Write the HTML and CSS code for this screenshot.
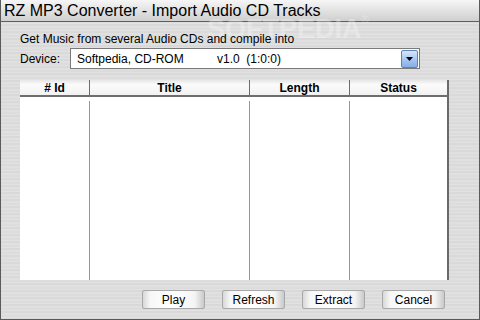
FILE: index.html
```html
<!DOCTYPE html>
<html>
<head>
  <title>RZ MP3 Converter - Import Audio CD Tracks</title>
  <link rel="stylesheet" href="styles.css">
</head>
<body>
  <div class="window">
    <div class="titlebar">RZ MP3 Converter - Import Audio CD Tracks</div>
    <div class="watermark">SOFTPEDIA<span class="reg">&reg;</span></div>
    <div class="content">
      <p class="intro">Get Music from several Audio CDs and compile into</p>
      <div class="device-row">
        <label>Device:</label>
        <div class="select">
          <span class="drive">Softpedia, CD-ROM</span>
          <span class="version">v1.0&nbsp;&nbsp;(1:0:0)</span>
          <span class="arrow"><svg width="7" height="4" viewBox="0 0 7 4"><path d="M0 0h7L3.5 4z" fill="#000"/></svg></span>
        </div>
      </div>
      <div class="tracks">
        <div class="col col-id"><div class="head"># Id</div><div class="cells"></div></div>
        <div class="col col-title"><div class="head">Title</div><div class="cells"></div></div>
        <div class="col col-length"><div class="head">Length</div><div class="cells"></div></div>
        <div class="col col-status"><div class="head">Status</div><div class="cells"></div></div>
      </div>
      <div class="buttons">
        <button>Play</button>
        <button>Refresh</button>
        <button>Extract</button>
        <button>Cancel</button>
      </div>
    </div>
  </div>
</body>
</html>
```

FILE: styles.css
```css
html, body {
  margin: 0;
  padding: 0;
}

body {
  font-family: "Liberation Sans", Arial, sans-serif;
  font-size: 12px;
  color: #000;
}

.window {
  position: relative;
  width: 480px;
  height: 320px;
  box-sizing: border-box;
  border: 1px solid #5a5a5a;
  border-top: none;
  background: repeating-linear-gradient(180deg, #dcdcdc 0, #dcdcdc 2px, #e2e2e2 2px, #e2e2e2 3px, #d9d9d9 3px, #d9d9d9 5px, #e0e0e0 5px, #e0e0e0 7px);
  overflow: hidden;
}

.titlebar {
  height: 21px;
  padding-left: 3px;
  line-height: 22px;
  font-size: 16px;
  border-bottom: 1px solid #5f5f5f;
  background: linear-gradient(180deg, #f6f6f6 0%, #e4e4e4 45%, #cfcfcf 100%);
}

.watermark {
  position: absolute;
  left: 206px;
  top: 14px;
  font-size: 27px;
  font-weight: bold;
  color: rgba(255, 255, 255, 0.3);
}

.watermark .reg {
  font-size: 10px;
  vertical-align: top;
  font-weight: normal;
}

.content {
  position: relative;
  padding: 9px 0 0 19px;
}

.intro {
  margin: 0;
  height: 17px;
  line-height: 16px;
}

.device-row {
  display: flex;
  align-items: center;
  height: 21px;
}

.device-row label {
  width: 50px;
}

.select {
  display: flex;
  align-items: center;
  width: 348px;
  height: 19px;
  border: 1px solid #7a7a7a;
  background: #fff;
}

.select .drive {
  width: 140px;
  padding-left: 6px;
}

.select .version {
  flex: 1;
}

.select .arrow {
  display: flex;
  align-items: center;
  justify-content: center;
  width: 15px;
  height: 16px;
  margin-right: 1px;
  border: 1px solid #5d82b8;
  border-radius: 2px;
  background: linear-gradient(180deg, #d6e6fb 0%, #a9c8f2 50%, #86aee6 100%);
}

.tracks {
  display: flex;
  width: 429px;
  height: 200px;
  margin-top: 11px;
  background: #fff;
  border-right: 2px solid #6a6a6a;
  box-sizing: border-box;
}

.col {
  display: flex;
  flex-direction: column;
}

.col-id { width: 70px; }
.col-title { width: 160px; }
.col-length { width: 100px; }
.col-status { flex: 1; }

.head {
  height: 15px;
  line-height: 16px;
  text-align: center;
  font-weight: bold;
  border-bottom: 2px solid #6d6d6d;
  background: linear-gradient(180deg, #e6e6e6 0%, #fbfbfb 30%, #f2f2f2 100%);
}

.cells {
  flex: 1;
  margin-top: 4px;
}

.col-id .head, .col-title .head, .col-length .head {
  border-right: 1px solid #6d6d6d;
}

.col-id .cells, .col-title .cells, .col-length .cells {
  border-right: 1px solid #7f99b3;
}

.buttons {
  display: flex;
  gap: 17px;
  margin: 10px 0 0 122px;
}

.buttons button {
  width: 63px;
  height: 19px;
  padding: 0;
  font-family: "Liberation Sans", Arial, sans-serif;
  font-size: 12px;
  color: #000;
  border: 1px solid #a8a8a8;
  border-radius: 2px;
  background: linear-gradient(90deg, #d8d8d8 0%, #f7f7f7 12%, #ffffff 50%, #f4f4f4 85%, #c9c9c9 100%);
}
```
